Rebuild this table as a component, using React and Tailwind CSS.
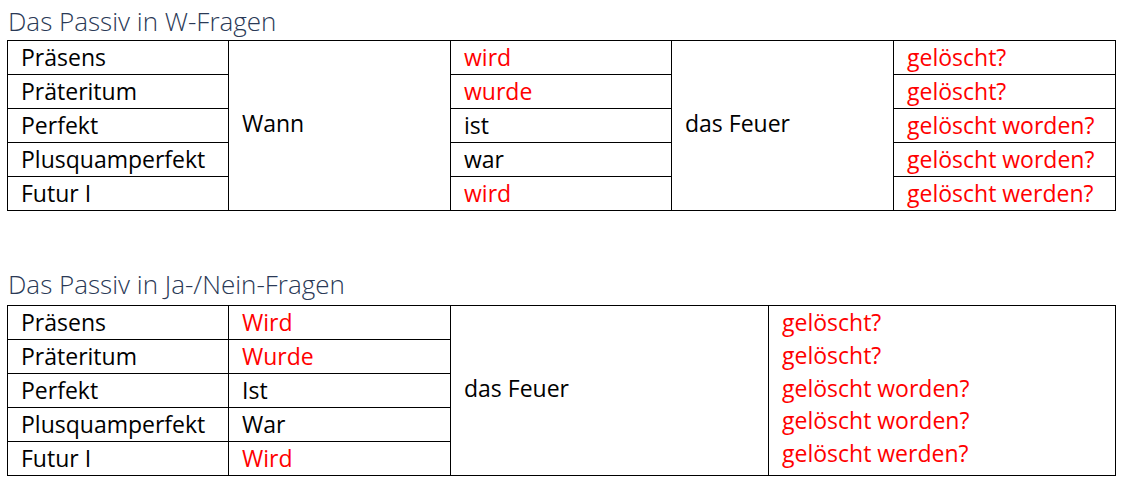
import React from 'react';

const red = 'text-[#ff0000]';

// erste Tabelle: W-Fragen
const wRows = [
  { tense: 'Präsens', verb: 'wird', verbRed: true, end: 'gelöscht?' },
  { tense: 'Präteritum', verb: 'wurde', verbRed: true, end: 'gelöscht?' },
  { tense: 'Perfekt', verb: 'ist', verbRed: false, end: 'gelöscht worden?' },
  { tense: 'Plusquamperfekt', verb: 'war', verbRed: false, end: 'gelöscht worden?' },
  { tense: 'Futur I', verb: 'wird', verbRed: true, end: 'gelöscht werden?' },
];

// zweite Tabelle: Ja-/Nein-Fragen
const jnRows = [
  { tense: 'Präsens', verb: 'Wird', verbRed: true, end: 'gelöscht?' },
  { tense: 'Präteritum', verb: 'Wurde', verbRed: true, end: 'gelöscht?' },
  { tense: 'Perfekt', verb: 'Ist', verbRed: false, end: 'gelöscht worden?' },
  { tense: 'Plusquamperfekt', verb: 'War', verbRed: false, end: 'gelöscht worden?' },
  { tense: 'Futur I', verb: 'Wird', verbRed: true, end: 'gelöscht werden?' },
];

const cell = 'border border-black h-[34px] pl-[13px] pr-1 py-0 leading-[33px] align-middle whitespace-nowrap';
const merged = 'border border-black pl-[13px] pr-2 pb-[5px] align-middle';

function Title({ children, className = '' }) {
  return (
    <div className={`pl-[1px] pt-[3px] leading-[36px] text-[26px] font-light text-[#2a3956] ${className}`}>
      {children}
    </div>
  );
}

export default function App() {
  return (
    <div className="min-h-screen bg-white pl-[7px] font-[family-name:'Open_Sans',sans-serif] text-[23px] text-black">
      <Title className="mb-[1px]">Das Passiv in W-Fragen</Title>
      <table className="w-[1108px] table-fixed border-collapse">
        <colgroup>
          <col className="w-[221px]" />
          <col className="w-[222px]" />
          <col className="w-[221px]" />
          <col className="w-[222px]" />
          <col className="w-[222px]" />
        </colgroup>
        <tbody>
          {wRows.map((r, i) => (
            <tr key={i}>
              <td className={cell}>{r.tense}</td>
              {i === 0 && (
                <td rowSpan={5} className={merged}>Wann</td>
              )}
              <td className={`${cell} ${r.verbRed ? red : ''}`}>{r.verb}</td>
              {i === 0 && (
                <td rowSpan={5} className={merged}>das Feuer</td>
              )}
              <td className={`${cell} ${red}`}>{r.end}</td>
            </tr>
          ))}
        </tbody>
      </table>

      <Title className="mt-[52px] mb-[3px]">Das Passiv in Ja-/Nein-Fragen</Title>
      <table className="w-[1108px] table-fixed border-collapse">
        <colgroup>
          <col className="w-[221px]" />
          <col className="w-[222px]" />
          <col className="w-[318px]" />
          <col className="w-[347px]" />
        </colgroup>
        <tbody>
          {jnRows.map((r, i) => (
            <tr key={i}>
              <td className={cell}>{r.tense}</td>
              <td className={`${cell} ${r.verbRed ? red : ''}`}>{r.verb}</td>
              {i === 0 && (
                <>
                  <td rowSpan={5} className={merged}>das Feuer</td>
                  <td rowSpan={5} className={`border border-black pl-[13px] pr-2 pt-0 align-top leading-[32.8px] ${red}`}>
                    {jnRows.map((x, j) => (
                      <div key={j}>{x.end}</div>
                    ))}
                  </td>
                </>
              )}
            </tr>
          ))}
        </tbody>
      </table>
    </div>
  );
}
